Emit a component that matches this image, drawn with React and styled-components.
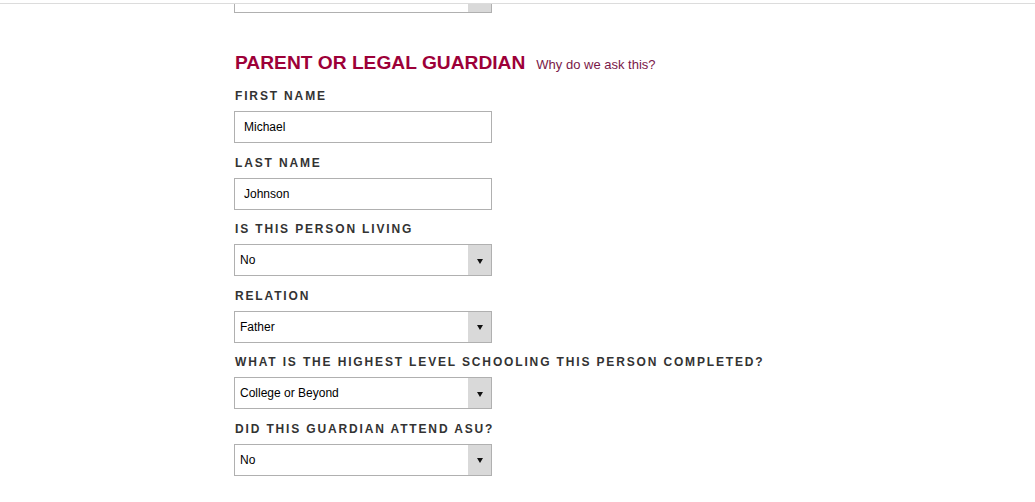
import styled, { createGlobalStyle } from 'styled-components'

const GlobalStyle = createGlobalStyle`
body {
  margin: 0;
  background: #fff;
  font-family: "Liberation Sans", Arial, sans-serif;
}`

const TopRule = styled.div`
position: fixed;
top: 0;
left: 0;
right: 0;
height: 3px;
background: #fff;
border-bottom: 1px solid #dcdcdc;
z-index: 2;`

const Page = styled.div`
padding: 0 0 40px 234px;`

const Section = styled.section`
margin-top: 38px;`

const HeadingRow = styled.div`
display: flex;
align-items: baseline;
gap: 11px;
margin-bottom: 14px;`

const Heading = styled.h2`
margin: 0 0 0 1px;
font-size: 19.2px;
line-height: 24px;
font-weight: bold;
color: #9d0038;`

const WhyLink = styled.a`
font-size: 13px;
color: #7a1848;
text-decoration: none;
cursor: pointer;`

const Field = styled.div`
display: flex;
flex-direction: column;
align-items: flex-start;
& + & {
  margin-top: 12.6px;
}`

const Label = styled.label`
font-size: 12px;
line-height: 14px;
font-weight: bold;
letter-spacing: 1.85px;
color: #333;
margin: 0 0 8px 1px;`

const TextInput = styled.div`
box-sizing: border-box;
width: 258px;
height: 32px;
border: 1px solid #b0b0b0;
padding: 0 9px;
display: flex;
align-items: center;
font-size: 12px;
color: #000;`

const Select = styled.div`
box-sizing: border-box;
width: 258px;
height: 32px;
border: 1px solid #b0b0b0;
display: flex;
align-items: stretch;
font-size: 12px;
color: #000;
margin-top: ${p => p.$offset || 0}px;`

const SelectValue = styled.span`
flex: 1;
display: flex;
align-items: center;
padding-left: 5px;`

const ArrowBox = styled.span`
width: 23px;
background: #d9d9d9;
display: flex;
align-items: center;
justify-content: center;`

const Triangle = styled.span`
width: 0;
height: 0;
border-left: 3.5px solid transparent;
border-right: 3.5px solid transparent;
border-top: 5px solid #111;
margin-top: 2px;`

const fields = [
  { label: 'First Name', value: 'Michael', type: 'text' },
  { label: 'Last Name', value: 'Johnson', type: 'text' },
  { label: 'Is this person living', value: 'No', type: 'select' },
  { label: 'Relation', value: 'Father', type: 'select' },
  { label: 'What is the highest level schooling this person completed?', value: 'College or Beyond', type: 'select' },
  { label: 'Did this guardian attend ASU?', value: 'No', type: 'select' },
]

function Dropdown({ value, offset }) {
  return (
    <Select $offset={offset}>
      <SelectValue>{value}</SelectValue>
      <ArrowBox><Triangle /></ArrowBox>
    </Select>
  )
}

export default function App() {
  return (
    <>
      <GlobalStyle />
      <TopRule />
      <Page>
        <Dropdown value="Any" offset={-19} />
        <Section>
          <HeadingRow>
            <Heading>PARENT OR LEGAL GUARDIAN</Heading>
            <WhyLink>Why do we ask this?</WhyLink>
          </HeadingRow>
          {fields.map(f => (
            <Field key={f.label}>
              <Label>{f.label.toUpperCase()}</Label>
              {f.type === 'text'
                ? <TextInput>{f.value}</TextInput>
                : <Dropdown value={f.value} />}
            </Field>
          ))}
        </Section>
      </Page>
    </>
  )
}
